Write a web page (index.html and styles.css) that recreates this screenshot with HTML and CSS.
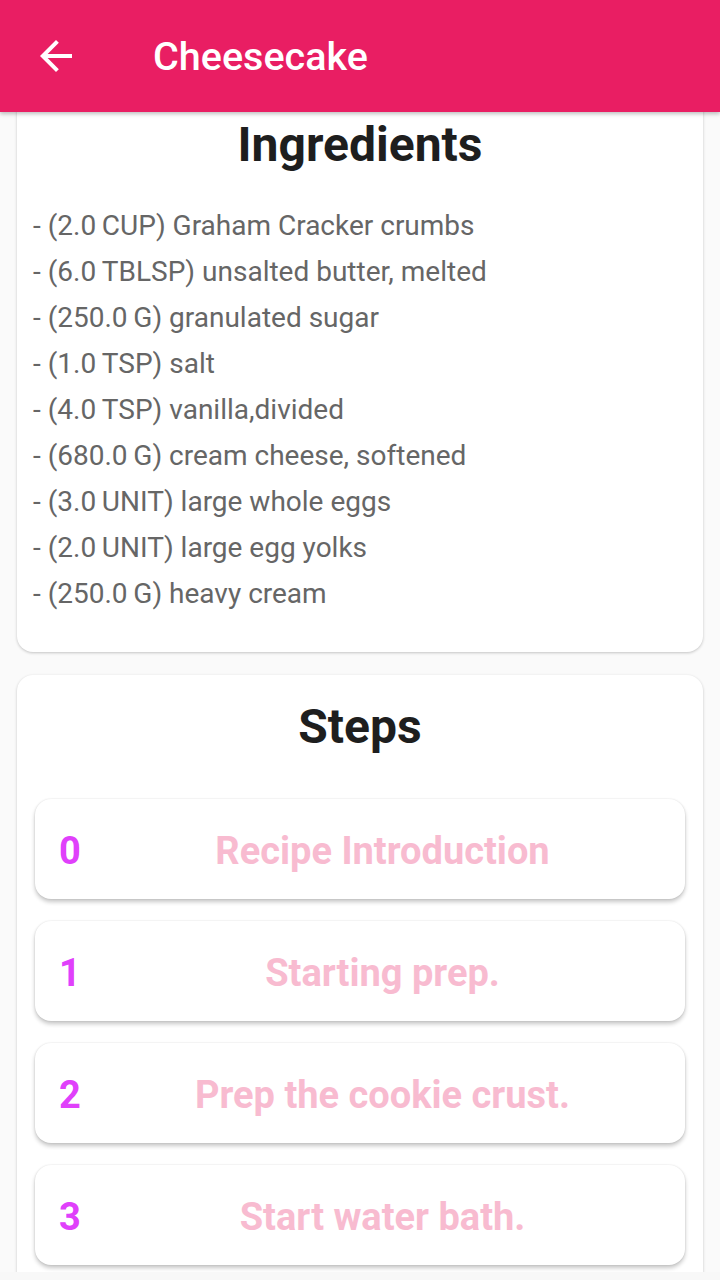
FILE: index.html
```html
<!DOCTYPE html>
<html>
<head>
<meta charset="utf-8">
<link rel="stylesheet" href="styles.css">
</head>
<body>
<div class="screen">
  <header class="appbar">
    <div class="back">
      <svg viewBox="0 0 24 24" width="48" height="48"><path fill="#fff" d="M20 11H7.83l5.59-5.59L12 4l-8 8 8 8 1.41-1.41L7.83 13H20v-2z"/></svg>
    </div>
    <h1 class="title">Cheesecake</h1>
  </header>
  <main class="scroll">
    <section class="card ingredients">
      <h2 class="card-title">Ingredients</h2>
      <ul class="ing-list">
        <li>- (2.0&#8201;CUP) Graham Cracker crumbs</li>
        <li>- (6.0&#8201;TBLSP) unsalted butter, melted</li>
        <li>- (250.0&#8201;G) granulated sugar</li>
        <li>- (1.0&#8201;TSP) salt</li>
        <li>- (4.0&#8201;TSP) vanilla,divided</li>
        <li>- (680.0&#8201;G) cream cheese, softened</li>
        <li>- (3.0&#8201;UNIT) large whole eggs</li>
        <li>- (2.0&#8201;UNIT) large egg yolks</li>
        <li>- (250.0&#8201;G) heavy cream</li>
      </ul>
    </section>
    <section class="card steps">
      <h2 class="card-title">Steps</h2>
      <div class="step-list">
        <div class="step"><span class="num">0</span><span class="step-title">Recipe Introduction</span></div>
        <div class="step"><span class="num">1</span><span class="step-title">Starting prep.</span></div>
        <div class="step"><span class="num">2</span><span class="step-title">Prep the cookie crust.</span></div>
        <div class="step"><span class="num">3</span><span class="step-title">Start water bath.</span></div>
      </div>
    </section>
  </main>
</div>
</body>
</html>
```
FILE: styles.css
```css
* { box-sizing: border-box; }
html, body { margin: 0; padding: 0; }
body {
  background: #f8f8f8;
  font-family: Roboto, "Noto Sans", sans-serif;
  width: 720px;
  height: 1280px;
  overflow: hidden;
}
.screen {
  width: 720px;
  height: 1272px;
  display: flex;
  flex-direction: column;
  background: #fafafa;
  overflow: hidden;
}
.appbar {
  height: 112px;
  flex: none;
  background: #e91e63;
  display: flex;
  align-items: center;
  padding-left: 32px;
  box-shadow: 0 2px 4px rgba(0,0,0,0.25);
  position: relative;
  z-index: 2;
}
.back { width: 48px; height: 48px; display: flex; }
.title {
  margin: 0 0 0 73px;
  color: #fff;
  font-size: 39.5px;
  font-weight: 500;
}
.scroll {
  flex: 1;
  overflow: hidden;
  padding: 0 17px;
}
.card {
  background: #fff;
  border-radius: 16px;
  box-shadow: 0 1px 3px rgba(0,0,0,0.22);
}
.card-title {
  margin: 0;
  text-align: center;
  font-size: 48px;
  line-height: 56px;
  font-weight: 700;
  color: #1e1e1e;
}
.ingredients {
  margin-top: -20px;
  padding: 25px 16px 35px;
}
.ing-list {
  list-style: none;
  margin: 30px 0 0;
  padding: 0;
}
.ing-list li {
  font-size: 28px;
  line-height: 46px;
  color: #666666;
}
.steps {
  margin-top: 23px;
  padding: 24px 18px 30px;
}
.step-list {
  margin-top: 44px;
  display: flex;
  flex-direction: column;
  gap: 22px;
}
.step {
  height: 100px;
  background: #fff;
  border-radius: 16px;
  box-shadow: 0 0 2px rgba(0,0,0,0.12), 0 3px 4px rgba(0,0,0,0.22);
  display: flex;
  align-items: center;
  padding: 3px 0 0 24px;
}
.num {
  color: #e040fb;
  font-size: 38px;
  font-weight: 700;
  width: 21px;
}
.step-title {
  flex: 1;
  text-align: center;
  color: #f8bbd0;
  font-size: 38px;
  font-weight: 700;
}
```
